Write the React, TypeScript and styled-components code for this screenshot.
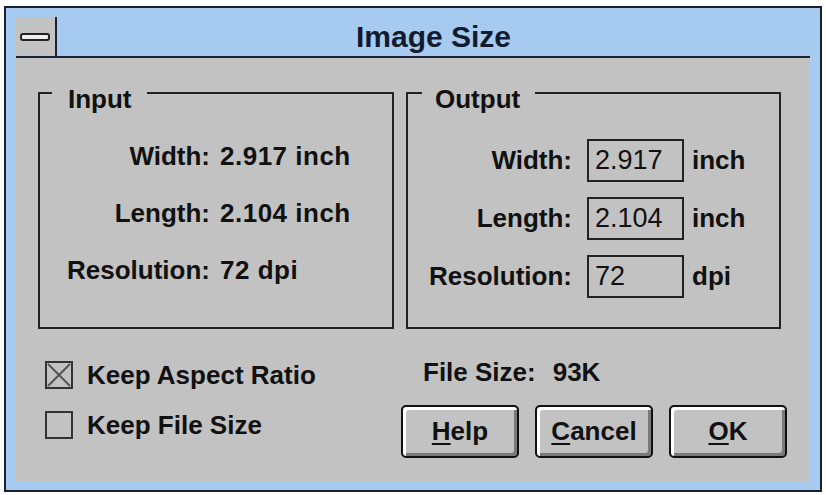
import styled, { createGlobalStyle } from "styled-components";

const GlobalStyle = createGlobalStyle`
  body {
    margin: 0;
    background: #ffffff;
    font-family: "Liberation Sans", Arial, sans-serif;
  }
`;

const Window = styled.div`
  box-sizing: border-box;
  margin: 6px 0 0 4px;
  width: 818px;
  height: 486px;
  border: 2px solid #1b2030;
  background: #a6caf0;
  padding: 9px 10px;
  display: flex;
  flex-direction: column;
`;

const TitleBar = styled.div`
  box-sizing: border-box;
  height: 41px;
  display: flex;
  border-bottom: 2px solid #1c2233;
  background: #a6caf0;
`;

const SysMenu = styled.div`
  box-sizing: border-box;
  width: 41px;
  background: #c2c2c2;
  border-right: 2px solid #1c2233;
  display: flex;
  align-items: center;
  justify-content: center;
  padding-right: 2px;
`;

const SysBar = styled.div`
  box-sizing: border-box;
  width: 30px;
  height: 8px;
  border: 2px solid #222;
  border-radius: 3px;
  background: #eeeeee;
`;

const Title = styled.div`
  flex: 1;
  display: flex;
  align-items: center;
  justify-content: center;
  font-size: 30px;
  font-weight: bold;
  color: #121a2e;
`;

const Body = styled.div`
  flex: 1;
  background: #c2c2c2;
  padding: 34px 0 0 22px;
  display: grid;
  grid-template-columns: 356px 375px;
  grid-template-rows: 237px auto;
  column-gap: 12px;
  color: #111;
  font-size: 26px;
  font-weight: bold;
`;

const Group = styled.div<{ $top: number; $labelCol: number; $gap: number; $rowH: number; $rowGap: number }>`
  position: relative;
  box-sizing: border-box;
  border: 2px solid #222;
  padding-top: ${(p) => p.$top}px;
  display: grid;
  grid-template-columns: ${(p) => p.$labelCol}px auto auto;
  grid-auto-rows: ${(p) => p.$rowH}px;
  row-gap: ${(p) => p.$rowGap}px;
  column-gap: ${(p) => p.$gap}px;
  align-content: start;
  justify-content: start;
  align-items: center;
`;

const Legend = styled.div<{ $left: number; $padL: number; $padR: number }>`
  position: absolute;
  top: -10px;
  left: ${(p) => p.$left}px;
  padding: 0 ${(p) => p.$padR}px 0 ${(p) => p.$padL}px;
  background: #c2c2c2;
  line-height: 30px;
`;

const Label = styled.div`
  text-align: right;
  white-space: nowrap;
`;

const Value = styled.div`
  white-space: nowrap;
  letter-spacing: 0.5px;
`;

const Field = styled.div`
  box-sizing: border-box;
  width: 97px;
  height: 43px;
  border: 2px solid #222;
  padding-left: 6px;
  display: flex;
  align-items: center;
  font-weight: normal;
  font-size: 27px;
`;

const Unit = styled.div`
  white-space: nowrap;
  margin-left: -7px;
`;

const CheckList = styled.div`
  padding: 32px 0 0 7px;
  display: flex;
  flex-direction: column;
  gap: 22px;
`;

const CheckRow = styled.div`
  display: flex;
  align-items: center;
  gap: 14px;
  height: 28px;
  white-space: nowrap;
`;

const CheckBox = styled.div`
  box-sizing: border-box;
  width: 28px;
  height: 28px;
  border: 2px solid #333;
  display: flex;
`;

const RightBottom = styled.div`
  padding-top: 28px;
`;

const FileSize = styled.div`
  padding-left: 17px;
  line-height: 30px;
  display: flex;
  gap: 17px;
`;

const Buttons = styled.div`
  margin: 18px 0 0 -5px;
  display: flex;
  gap: 16px;
`;

const Button = styled.button`
  box-sizing: border-box;
  flex: none;
  width: 118px;
  height: 53px;
  border: 2px solid #111;
  border-radius: 5px;
  background: #c2c2c2;
  box-shadow: inset 3px 3px 0 #ffffff, inset -3px -3px 0 #7a7a7a;
  font-family: "Liberation Sans", Arial, sans-serif;
  font-size: 26px;
  font-weight: bold;
  color: #111;
  padding: 0;
  u {
    text-decoration-thickness: 2px;
    text-underline-offset: 3px;
  }
`;

function Check({ checked, label }: { checked: boolean; label: string }) {
  return (
    <CheckRow>
      <CheckBox>
        {checked && (
          <svg width="24" height="24" viewBox="0 0 24 24">
            <path d="M1 1L23 23M23 1L1 23" stroke="#555" strokeWidth="2" />
          </svg>
        )}
      </CheckBox>
      {label}
    </CheckRow>
  );
}

export default function App() {
  return (
    <>
      <GlobalStyle />
      <Window>
        <TitleBar>
          <SysMenu>
            <SysBar />
          </SysMenu>
          <Title>Image Size</Title>
        </TitleBar>
        <Body>
          <Group $top={34} $labelCol={170} $gap={10} $rowH={57} $rowGap={0}>
            <Legend $left={12} $padL={16} $padR={15}>Input</Legend>
            <Label>Width:</Label>
            <Value>2.917 inch</Value>
            <span />
            <Label>Length:</Label>
            <Value>2.104 inch</Value>
            <span />
            <Label>Resolution:</Label>
            <Value>72 dpi</Value>
            <span />
          </Group>
          <Group $top={45} $labelCol={164} $gap={15} $rowH={43} $rowGap={15}>
            <Legend $left={14} $padL={13} $padR={15}>Output</Legend>
            <Label>Width:</Label>
            <Field>2.917</Field>
            <Unit>inch</Unit>
            <Label>Length:</Label>
            <Field>2.104</Field>
            <Unit>inch</Unit>
            <Label>Resolution:</Label>
            <Field>72</Field>
            <Unit>dpi</Unit>
          </Group>
          <CheckList>
            <Check checked label="Keep Aspect Ratio" />
            <Check checked={false} label="Keep File Size" />
          </CheckList>
          <RightBottom>
            <FileSize>
              <span>File Size:</span>
              <span>93K</span>
            </FileSize>
            <Buttons>
              <Button>
                <u>H</u>elp
              </Button>
              <Button>
                <u>C</u>ancel
              </Button>
              <Button>
                <u>O</u>K
              </Button>
            </Buttons>
          </RightBottom>
        </Body>
      </Window>
    </>
  );
}
